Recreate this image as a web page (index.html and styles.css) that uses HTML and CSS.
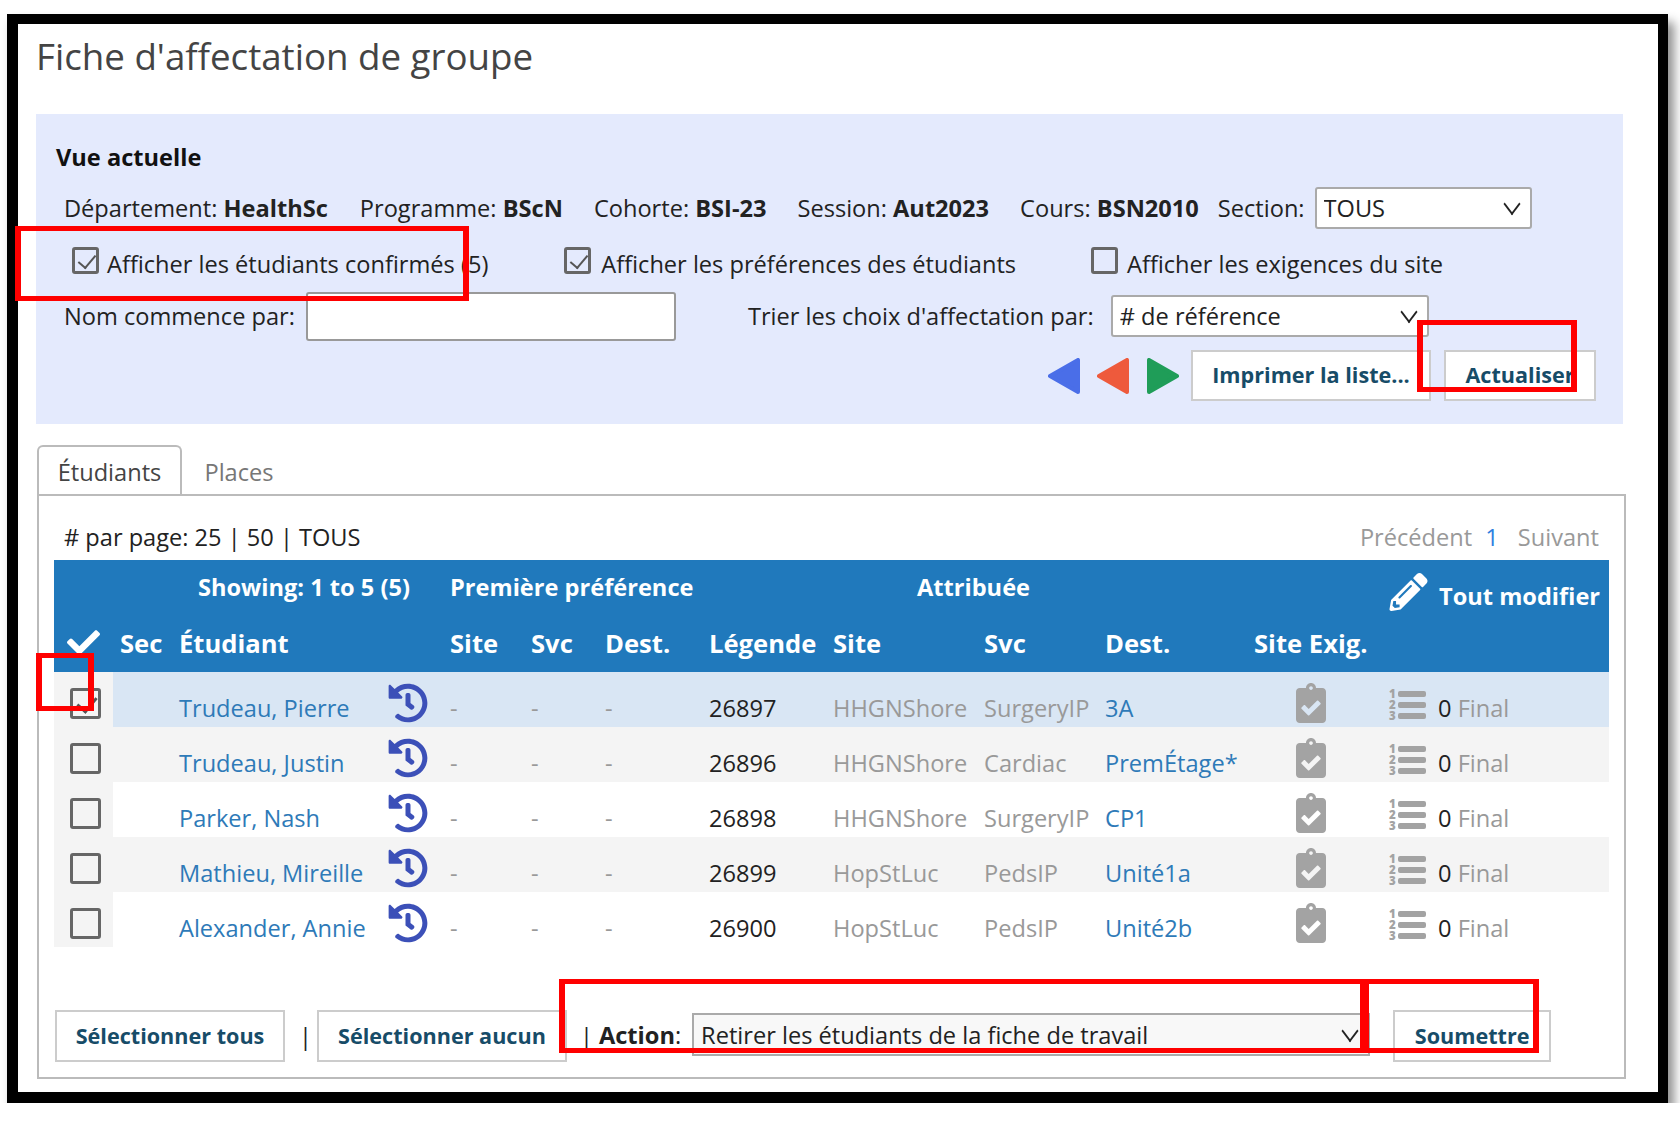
FILE: index.html
```html
<!DOCTYPE html>
<html lang="fr">
<head>
    <meta charset="UTF-8">
    <title>Fiche d'affectation de groupe</title>
    <link rel="stylesheet" href="styles.css">
</head>
<body>
    <svg class="icon-defs" width="0" height="0" aria-hidden="true">
        <symbol id="i-history" viewBox="0 0 512 512"><path d="M504 255.531c.253 136.64-111.18 248.372-247.82 248.468-59.015.042-113.223-20.53-155.822-54.911-11.077-8.94-11.905-25.541-1.839-35.607l11.267-11.267c8.609-8.609 22.353-9.551 31.891-1.984C173.062 425.135 212.781 440 256 440c101.705 0 184-82.311 184-184 0-101.705-82.311-184-184-184-48.814 0-93.149 18.969-126.068 49.932l50.754 50.754c10.08 10.08 2.941 27.314-11.313 27.314H24c-8.837 0-16-7.163-16-16V38.627c0-14.254 17.234-21.393 27.314-11.314l49.372 49.372C129.209 31.084 189.552 8 256 8c136.81 0 247.747 110.78 248 247.531zm-180.912 78.784l9.823-12.63c8.138-10.463 6.253-25.542-4.21-33.679L288 256.349V152c0-13.255-10.745-24-24-24h-16c-13.255 0-24 10.745-24 24v135.651l65.409 50.874c10.463 8.137 25.541 6.253 33.679-4.21z"/></symbol>
        <symbol id="i-clipboard" viewBox="0 0 384 512"><path d="M336 64h-80c0-35.3-28.7-64-64-64s-64 28.7-64 64H48C21.5 64 0 85.5 0 112v352c0 26.5 21.5 48 48 48h288c26.5 0 48-21.5 48-48V112c0-26.5-21.5-48-48-48zM192 40c13.3 0 24 10.7 24 24s-10.7 24-24 24-24-10.7-24-24 10.7-24 24-24zm121.2 231.8l-143 141.8c-4.7 4.7-12.3 4.6-17-.1l-82.6-83.3c-4.7-4.7-4.6-12.3.1-17L99.1 285c4.7-4.7 12.3-4.6 17 .1l46 46.4 106-105.2c4.7-4.7 12.3-4.6 17 .1l28.2 28.4c4.7 4.8 4.6 12.3-.1 17z"/></symbol>
    </svg>

    <div class="frame">
        <h1 class="page-title">Fiche d'affectation de groupe</h1>

        <section class="view-panel">
            <h2 class="view-title">Vue actuelle</h2>
            <div class="view-row info-row">
                <span class="info info-dept">Département: <b>HealthSc</b></span>
                <span class="info info-prog">Programme: <b>BScN</b></span>
                <span class="info info-coh">Cohorte: <b>BSI-23</b></span>
                <span class="info info-ses">Session: <b>Aut2023</b></span>
                <span class="info info-cours">Cours: <b>BSN2010</b></span>
                <span class="info info-sec">Section:</span>
                <span class="select select-section"><select><option>TOUS</option></select></span>
            </div>
            <div class="view-row check-row">
                <label class="check check-conf"><input type="checkbox" checked> Afficher les étudiants confirmés (5)</label>
                <label class="check check-pref"><input type="checkbox" checked> Afficher les préférences des étudiants</label>
                <label class="check check-site"><input type="checkbox"> Afficher les exigences du site</label>
            </div>
            <div class="view-row search-row">
                <label class="name-label" for="nameStart">Nom commence par:</label>
                <input class="name-input" id="nameStart" type="text">
                <span class="sort-label">Trier les choix d'affectation par:</span>
                <span class="select select-sort"><select><option># de référence</option></select></span>
            </div>
            <div class="view-row action-row">
                <svg class="arrow arrow-blue" viewBox="0 0 32 36"><polygon points="30,2 30,34 2,18"/></svg>
                <svg class="arrow arrow-orange" viewBox="0 0 32 36"><polygon points="30,2 30,34 2,18"/></svg>
                <svg class="arrow arrow-green" viewBox="0 0 32 36"><polygon points="2,2 2,34 30,18"/></svg>
                <button class="btn btn-print">Imprimer la liste...</button>
                <button class="btn btn-refresh">Actualiser</button>
            </div>
        </section>

        <nav class="tabs">
            <a class="tab active">Étudiants</a>
            <a class="tab">Places</a>
        </nav>

        <section class="tab-box">
            <div class="pager">
                <span># par page: 25 | 50 | TOUS</span>
                <span class="pager-nav">Précédent <a class="page-num">1</a> Suivant</span>
            </div>

            <table class="students">
                <colgroup>
                    <col class="c-check"><col class="c-sec"><col class="c-name"><col class="c-hist">
                    <col class="c-site"><col class="c-svc"><col class="c-dest"><col class="c-leg">
                    <col class="c-asite"><col class="c-asvc"><col class="c-adest"><col class="c-exig"><col class="c-last">
                </colgroup>
                <thead>
                    <tr class="head-top">
                        <th colspan="2"></th>
                        <th colspan="2" class="th-showing">Showing: 1 to 5 (5)</th>
                        <th colspan="4">Première préférence</th>
                        <th colspan="4" class="th-assigned">Attribuée</th>
                        <th class="th-edit">
                            <span class="edit-all">
                                <svg class="pencil" viewBox="0 0 512 512"><path d="M497.9 142.1l-46.1 46.1c-4.7 4.7-12.3 4.7-17 0l-111-111c-4.7-4.7-4.7-12.3 0-17l46.1-46.1c18.7-18.7 49.1-18.7 67.9 0l60.1 60.1c18.8 18.7 18.8 49.1 0 67.9zM284.2 99.8L21.6 362.4.4 483.9c-2.9 16.4 11.4 30.6 27.8 27.8l121.5-21.3 262.6-262.6c4.7-4.7 4.7-12.3 0-17l-111-111c-4.8-4.7-12.4-4.7-17.1 0zM124.1 339.9c-5.5-5.5-5.5-14.3 0-19.8l154-154c5.5-5.5 14.3-5.5 19.8 0s5.5 14.3 0 19.8l-154 154c-5.5 5.5-14.3 5.5-19.8 0zM88 424h48v36.3l-64.5 11.3-31.1-31.1L51.7 376H88v48z"/></svg>
                                Tout modifier
                            </span>
                        </th>
                    </tr>
                    <tr class="head-cols">
                        <th class="th-check"><svg class="check-all" viewBox="0 0 512 512"><path d="M173.898 439.404l-166.4-166.4c-9.997-9.997-9.997-26.206 0-36.204l36.203-36.204c9.997-10.998 26.207-9.998 36.204 0L192 312.69 432.095 72.596c9.997-9.997 26.207-9.997 36.204 0l36.203 36.204c9.997 9.997 9.997 26.206 0 36.204l-294.4 294.401c-9.998 9.997-26.207 9.997-36.204-.001z"/></svg></th>
                        <th class="th-sec">Sec</th>
                        <th colspan="2">Étudiant</th>
                        <th>Site</th>
                        <th>Svc</th>
                        <th>Dest.</th>
                        <th>Légende</th>
                        <th>Site</th>
                        <th>Svc</th>
                        <th>Dest.</th>
                        <th colspan="2">Site Exig.</th>
                    </tr>
                </thead>
                <tbody>
                    <tr class="selected">
                        <td class="td-check"><input type="checkbox" checked></td>
                        <td></td>
                        <td><a class="link">Trudeau, Pierre</a></td>
                        <td class="td-icon"><svg class="history"><use href="#i-history"/></svg></td>
                        <td class="muted">-</td><td class="muted">-</td><td class="muted">-</td>
                        <td>26897</td>
                        <td class="muted">HHGNShore</td>
                        <td class="muted">SurgeryIP</td>
                        <td><a class="link">3A</a></td>
                        <td class="td-icon td-exig"><svg class="clipboard"><use href="#i-clipboard"/></svg></td>
                        <td class="td-final">
                            <span class="list"><span class="list-line">1</span><span class="list-line">2</span><span class="list-line">3</span></span>
                            <span class="final-num">0</span> <span class="muted">Final</span>
                        </td>
                    </tr>
                    <tr class="alt">
                        <td class="td-check"><input type="checkbox"></td>
                        <td></td>
                        <td><a class="link">Trudeau, Justin</a></td>
                        <td class="td-icon"><svg class="history"><use href="#i-history"/></svg></td>
                        <td class="muted">-</td><td class="muted">-</td><td class="muted">-</td>
                        <td>26896</td>
                        <td class="muted">HHGNShore</td>
                        <td class="muted">Cardiac</td>
                        <td><a class="link">PremÉtage*</a></td>
                        <td class="td-icon td-exig"><svg class="clipboard"><use href="#i-clipboard"/></svg></td>
                        <td class="td-final">
                            <span class="list"><span class="list-line">1</span><span class="list-line">2</span><span class="list-line">3</span></span>
                            <span class="final-num">0</span> <span class="muted">Final</span>
                        </td>
                    </tr>
                    <tr>
                        <td class="td-check"><input type="checkbox"></td>
                        <td></td>
                        <td><a class="link">Parker, Nash</a></td>
                        <td class="td-icon"><svg class="history"><use href="#i-history"/></svg></td>
                        <td class="muted">-</td><td class="muted">-</td><td class="muted">-</td>
                        <td>26898</td>
                        <td class="muted">HHGNShore</td>
                        <td class="muted">SurgeryIP</td>
                        <td><a class="link">CP1</a></td>
                        <td class="td-icon td-exig"><svg class="clipboard"><use href="#i-clipboard"/></svg></td>
                        <td class="td-final">
                            <span class="list"><span class="list-line">1</span><span class="list-line">2</span><span class="list-line">3</span></span>
                            <span class="final-num">0</span> <span class="muted">Final</span>
                        </td>
                    </tr>
                    <tr class="alt">
                        <td class="td-check"><input type="checkbox"></td>
                        <td></td>
                        <td><a class="link">Mathieu, Mireille</a></td>
                        <td class="td-icon"><svg class="history"><use href="#i-history"/></svg></td>
                        <td class="muted">-</td><td class="muted">-</td><td class="muted">-</td>
                        <td>26899</td>
                        <td class="muted">HopStLuc</td>
                        <td class="muted">PedsIP</td>
                        <td><a class="link">Unité1a</a></td>
                        <td class="td-icon td-exig"><svg class="clipboard"><use href="#i-clipboard"/></svg></td>
                        <td class="td-final">
                            <span class="list"><span class="list-line">1</span><span class="list-line">2</span><span class="list-line">3</span></span>
                            <span class="final-num">0</span> <span class="muted">Final</span>
                        </td>
                    </tr>
                    <tr>
                        <td class="td-check"><input type="checkbox"></td>
                        <td></td>
                        <td><a class="link">Alexander, Annie</a></td>
                        <td class="td-icon"><svg class="history"><use href="#i-history"/></svg></td>
                        <td class="muted">-</td><td class="muted">-</td><td class="muted">-</td>
                        <td>26900</td>
                        <td class="muted">HopStLuc</td>
                        <td class="muted">PedsIP</td>
                        <td><a class="link">Unité2b</a></td>
                        <td class="td-icon td-exig"><svg class="clipboard"><use href="#i-clipboard"/></svg></td>
                        <td class="td-final">
                            <span class="list"><span class="list-line">1</span><span class="list-line">2</span><span class="list-line">3</span></span>
                            <span class="final-num">0</span> <span class="muted">Final</span>
                        </td>
                    </tr>
                </tbody>
            </table>

            <div class="table-actions">
                <button class="btn btn-all">Sélectionner tous</button>
                <span class="sep sep-a">|</span>
                <button class="btn btn-none">Sélectionner aucun</button>
                <span class="sep sep-b">|</span>
                <span class="action-label"><b>Action</b>:</span>
                <span class="select select-action"><select><option>Retirer les étudiants de la fiche de travail</option></select></span>
                <button class="btn btn-submit">Soumettre</button>
            </div>
        </section>

        <!-- annotations drawn over the screenshot -->
        <div class="mark mark-confirmed"></div>
        <div class="mark mark-refresh"></div>
        <div class="mark mark-rowcheck"></div>
        <div class="mark mark-action"></div>
        <div class="mark mark-submit"></div>
    </div>
</body>
</html>
```

FILE: styles.css
```css
* {
    box-sizing: border-box;
}

body {
    margin: 0;
    background: #fff;
    color: #222;
    font-family: "Open Sans", "Liberation Sans", sans-serif;
    font-size: 23.6px;
}

.icon-defs {
    position: absolute;
}

.frame {
    position: relative;
    width: 1661px;
    margin: 14px 0 0 7px;
    padding: 7px 32px 13px 18px;
    border-style: solid;
    border-color: #000;
    border-width: 10px 10px 11px 11px;
    background: #fff;
    box-shadow: 6px 8px 10px rgba(0, 0, 0, 0.45);
}

.page-title {
    margin: 0 0 33px;
    font-size: 36.7px;
    font-weight: 400;
    line-height: 50px;
    color: #444;
}

/* current view */
.view-panel {
    margin-right: 3px;
    padding: 25px 0 23px 20px;
    background: #e4eafd;
}

.view-title {
    margin: 0;
    font-size: 23.6px;
    font-weight: 700;
    line-height: 36px;
    color: #111;
}

.view-row {
    display: flex;
    align-items: center;
}

.info-row {
    height: 66px;
    padding-left: 8px;
}

.info-prog { margin-left: 32px; }
.info-coh { margin-left: 31px; }
.info-ses { margin-left: 31px; }
.info-cours { margin-left: 31px; }
.info-sec { margin-left: 19px; }

.check-row {
    height: 46px;
    padding-left: 16px;
}

.check {
    display: flex;
    align-items: center;
    gap: 8px;
}

.check-pref { margin-left: 76px; gap: 10px; }
.check-site { margin-left: 75px; gap: 9px; }

input[type="checkbox"] {
    appearance: none;
    position: relative;
    flex: none;
    width: 27px;
    height: 27px;
    margin: -8px 0 0;
    border: 3px solid #666;
    border-radius: 3px;
    background: transparent;
}

input[type="checkbox"]:checked::after {
    content: "";
    position: absolute;
    left: 7px;
    top: 1px;
    width: 8px;
    height: 15px;
    border: solid #555;
    border-width: 0 2px 2px 0;
    transform: rotate(40deg);
}

.search-row {
    height: 58px;
    padding-left: 8px;
}

.name-input {
    width: 370px;
    height: 49px;
    margin-left: 11px;
    border: 2px solid #999;
    border-radius: 3px;
    background: #fff;
}

.sort-label {
    margin-left: 72px;
}

.select {
    position: relative;
    display: inline-block;
}

.select::after {
    content: "";
    position: absolute;
    top: 50%;
    right: 13px;
    width: 12px;
    height: 12px;
    margin-top: -11px;
    border: solid #222;
    border-width: 0 2px 2px 0;
    transform: rotate(45deg) skew(8deg, 8deg);
    pointer-events: none;
}

.select select {
    appearance: none;
    display: block;
    width: 100%;
    height: 100%;
    padding: 0 0 1px 7px;
    border: 2px solid #aaa;
    border-radius: 3px;
    background: #fff;
    color: #222;
    font: inherit;
}

.select-section {
    width: 217px;
    height: 42px;
    margin-left: 10px;
}

.select-sort {
    width: 318px;
    height: 42px;
    margin: 0 0 0 17px;
}

.action-row {
    height: 51px;
    margin-top: 5px;
    justify-content: flex-end;
    padding-right: 27px;
}

.arrow {
    width: 32px;
    height: 36px;
    stroke-linejoin: round;
    stroke-width: 4px;
}

.arrow-blue { fill: #4a6ee8; stroke: #4a6ee8; margin-right: 17px; }
.arrow-orange { fill: #ee5a3c; stroke: #ee5a3c; margin-right: 18px; }
.arrow-green { fill: #1f9d58; stroke: #1f9d58; margin-right: 12px; }

.btn {
    height: 52px;
    padding: 0 0 2px;
    border: 2px solid #ccc;
    background: #fff;
    color: #174c68;
    font: 700 21.6px "Open Sans", "Liberation Sans", sans-serif;
}

.btn-print { width: 240px; height: 51px; margin-right: 13px; }
.btn-refresh { width: 152px; height: 51px; }

/* tabs */
.tabs {
    display: flex;
    height: 49px;
    margin: 21px 0 0 1px;
}

.tab {
    width: 145px;
    padding-top: 9px;
    border: 2px solid transparent;
    border-bottom: 0;
    text-align: center;
    color: #777;
}

.tab.active {
    border-color: #bbb;
    border-radius: 6px 6px 0 0;
    color: #444;
}

.tab + .tab {
    width: 114px;
}

.tab-box {
    margin-left: 1px;
    padding: 0 15px 15px;
    border: 2px solid #bbb;
}

.pager {
    display: flex;
    justify-content: space-between;
    align-items: center;
    height: 44px;
    margin-top: 20px;
    padding: 0 10px 2px;
}

.pager-nav {
    color: #999;
}

.page-num {
    margin: 0 13px 0 7px;
    color: #2f7fe0;
}

/* students table */
.students {
    width: 1555px;
    border-collapse: collapse;
    table-layout: fixed;
}

.c-check { width: 59px; }
.c-sec { width: 66px; }
.c-name { width: 209px; }
.c-hist { width: 62px; }
.c-site { width: 81px; }
.c-svc { width: 74px; }
.c-dest { width: 104px; }
.c-leg { width: 124px; }
.c-asite { width: 151px; }
.c-asvc { width: 121px; }
.c-adest { width: 149px; }
.c-exig { width: 135px; }
.c-last { width: 220px; }

.students thead {
    background: #2079bc;
    color: #fff;
}

.students thead tr {
    height: 56px;
}

.students th {
    padding: 0 0 2px;
    text-align: left;
    font-weight: 700;
    white-space: nowrap;
}

.head-top th {
    font-size: 23.6px;
}

.head-cols th {
    font-size: 25.6px;
}

.students th.th-showing { padding-left: 19px; }
.students th.th-assigned { padding-left: 84px; }
.students th.th-edit { padding: 16px 0 0; }
.students th.th-sec { padding-left: 7px; }
.students th.th-check { padding: 0 0 4px 13px; }

.edit-all {
    display: flex;
    align-items: center;
    gap: 11px;
}

.pencil {
    width: 39px;
    height: 38px;
    margin-top: -8px;
    fill: #fff;
}

.check-all {
    display: block;
    width: 33px;
    height: 33px;
    fill: #fff;
}

.students tbody tr {
    height: 55px;
}

.students td {
    padding: 17px 0 0;
    white-space: nowrap;
}

.students td.td-check,
.students td.td-icon {
    padding-top: 7px;
}

.selected { background: #d9e6f4; }
.alt { background: #f4f4f4; }

.students td.td-check {
    padding-left: 16px;
    background: #f4f4f4;
}

.td-check input[type="checkbox"] {
    display: block;
    width: 31px;
    height: 31px;
    margin: 0;
}

.td-check input[type="checkbox"]:checked::after {
    left: 8px;
    top: 2px;
    width: 9px;
    height: 16px;
    border-width: 0 3px 3px 0;
}

.link { color: #2e7ab8; }
.muted { color: #999; }

.history {
    display: block;
    width: 40px;
    height: 40px;
    fill: #3c50b8;
}

.students td.td-exig {
    padding-left: 42px;
}

.clipboard {
    display: block;
    width: 30px;
    height: 40px;
    fill: #a3a3a3;
}

.students td.td-final {
    position: relative;
    padding-left: 49px;
}

/* sits higher in the row than the count beside it */
.list {
    position: absolute;
    left: 0;
    top: 16px;
    display: grid;
    grid-auto-rows: 11px;
    width: 37px;
}

.list-line {
    display: flex;
    align-items: center;
    gap: 2px;
    color: #a3a3a3;
    font-size: 11.5px;
    font-weight: 800;
    line-height: 11px;
}

.list-line::after {
    content: "";
    flex: 1;
    height: 6px;
    border-radius: 2px;
    background: #a3a3a3;
}

/* actions under the table */
.table-actions {
    display: flex;
    align-items: center;
    margin: 63px 0 0 1px;
    height: 52px;
}

.sep-a { margin: 0 5px 0 14px; }
.sep-b { margin: 0 6px 0 13px; }

.action-label {
    margin-right: 11px;
    padding-bottom: 3px;
}

.btn-all { width: 230px; }
.btn-none { width: 250px; }

.select-action {
    width: 678px;
    height: 43px;
    margin-top: -3px;
}

.select-action select {
    padding-top: 2px;
    border-radius: 0;
    background: #f8f8f8;
}

.btn-submit {
    width: 158px;
    margin-left: 23px;
}

/* red annotation boxes */
.mark {
    position: absolute;
    border-style: solid;
    border-color: #f00;
    border-width: 5px 6px;
}

.mark-confirmed { left: -3px; top: 202px; width: 454px; height: 75px; }
.mark-refresh { left: 1399px; top: 296px; width: 160px; height: 72px; }
.mark-rowcheck { left: 18px; top: 629px; width: 58px; height: 58px; }
.mark-action { left: 541px; top: 955px; width: 810px; height: 74px; }
.mark-submit { left: 1342px; top: 955px; width: 179px; height: 74px; }
```
